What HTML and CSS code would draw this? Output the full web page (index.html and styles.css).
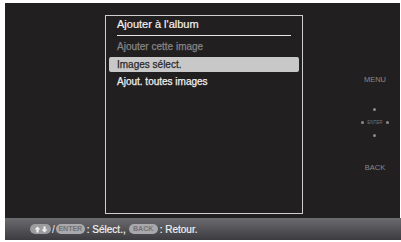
FILE: index.html
```html
<!doctype html>
<html>
<head>
<meta charset="utf-8">
<title>Ajouter à l'album</title>
	<link rel="stylesheet" href="styles.css">
</head>

<body>
	<div class="screen">
		<div class="main">
			<div class="menu-box">
				<h2 class="menu-title">Ajouter à l'album</h2>
				<ul class="menu-list">
					<li class="disabled">Ajouter cette image</li>
					<li class="selected">Images sélect.</li>
					<li>Ajout. toutes images</li>
				</ul>
			</div>
			<div class="side">
				<span class="side-label">MENU</span>
				<div class="pad">
					<span class="dot"></span>
					<div class="pad-row">
						<span class="dot"></span>
						<span class="pad-enter">ENTER</span>
						<span class="dot"></span>
					</div>
					<span class="dot"></span>
				</div>
				<span class="side-label">BACK</span>
			</div>
		</div>
		<div class="guide">
			<span class="key key-arrows">
				<svg width="14" height="7" viewBox="0 0 14 7">
					<path d="M3.5 0.5 L6.5 3.5 H4.6 V6.5 H2.4 V3.5 H0.5 Z" fill="#f0f0f0"/>
					<path d="M10.5 6.5 L13.5 3.5 H11.6 V0.5 H9.4 V3.5 H7.5 Z" fill="#f0f0f0"/>
				</svg>
			</span>
			<span class="sep">/</span>
			<span class="key">ENTER</span>
			<span class="txt">: Sélect.,</span>
			<span class="key">BACK</span>
			<span class="txt">: Retour.</span>
		</div>
	</div>
</body>
</html>
```

FILE: styles.css
```css
*{box-sizing: border-box;}
body{
	margin: 0;
	background-color: #fff;
	font-family: "Liberation Sans", Arial, sans-serif;
}
.screen{
	margin: 3px 0 0 5px;
	width: 395px;
	height: 237px;
	background-color: #221f20;
	display: flex;
	flex-direction: column;
}
.main{
	height: 215px;
	display: flex;
	padding: 12px 0 0 100px;
}
.menu-box{
	width: 198px;
	height: 199px;
	border: 1px solid #cfcfcf;
	padding: 0 3px;
}
.menu-title{
	margin: 0 8px;
	padding: 2px 0 4px;
	font-size: 11px;
	line-height: 13px;
	font-weight: normal;
	color: #f2f2f2;
	-webkit-text-stroke: 0.2px currentColor;
	border-bottom: 1px solid #e6e6e6;
	width: 174px;
}
.menu-list{
	list-style-type: none;
	margin: 3px 0 0;
	padding: 0;
}
.menu-list li{
	height: 15px;
	margin-bottom: 2.5px;
	padding-left: 8px;
	font-size: 10px;
	line-height: 15px;
	color: #f0f0f0;
	-webkit-text-stroke: 0.25px currentColor;
}
.menu-list li.disabled{
	color: #858585;
}
.menu-list li.selected{
	background-color: #c8c8c8;
	color: #2a2a2a;
	border-radius: 2px;
}
.side{
	margin-left: auto;
	width: 50px;
	display: flex;
	flex-direction: column;
	align-items: center;
	padding-top: 60px;
}
.side-label{
	font-size: 7.5px;
	line-height: 9px;
	color: #8a8a8a;
}
.pad{
	display: flex;
	flex-direction: column;
	align-items: center;
	gap: 9px;
	margin: 24px 0 26px;
}
.pad-row{
	display: flex;
	align-items: center;
	height: 5px;
	gap: 3px;
}
.pad-enter{
	font-size: 4.5px;
	color: #777;
}
.dot{
	width: 3px;
	height: 3px;
	border-radius: 50%;
	background-color: #8c8c8c;
}
.guide{
	height: 22px;
	margin-right: -1px;
	background-image: linear-gradient(180deg,#6b6b70 0%,#55555a 45%,#3c3c40 100%);
	display: flex;
	align-items: center;
	padding-left: 25px;
	font-size: 10px;
	color: #f2f2f2;
}
.txt{
	-webkit-text-stroke: 0.2px currentColor;
	margin: 0 3px 0 2px;
}
.key{
	background-color: #a9a9ab;
	color: #727275;
	border-radius: 6px;
	font-size: 7px;
	height: 10px;
	line-height: 10px;
	width: 29px;
	text-align: center;
	font-weight: bold;
}
.key-arrows{
	width: 21px;
	display: flex;
	align-items: center;
	justify-content: center;
	background-color: #9c9c9f;
}
.sep{
	margin: 0 1px;
}
```
